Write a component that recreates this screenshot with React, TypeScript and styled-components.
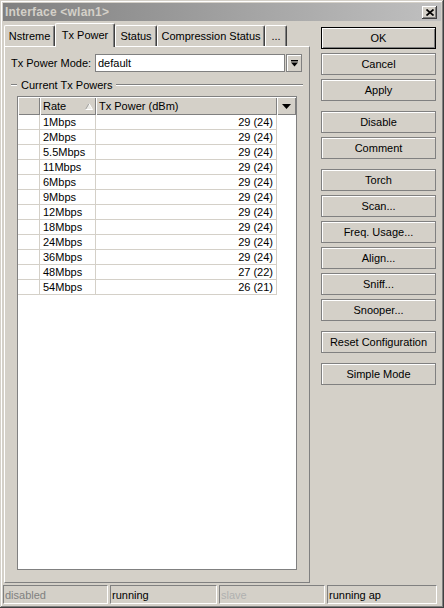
import styled, { createGlobalStyle } from "styled-components";

const GlobalStyle = createGlobalStyle`
  html, body {
    margin: 0;
    padding: 0;
    background: #d4d0c8;
  }
  body {
    font-family: "Liberation Sans", Arial, sans-serif;
    font-size: 11px;
    color: #000;
  }
  * {
    box-sizing: border-box;
  }
`;

const Window = styled.div`
  width: 444px;
  height: 608px;
  padding: 3px;
  display: flex;
  flex-direction: column;
  background: #d4d0c8;
  box-shadow: inset -1px -1px #404040, inset 1px 1px #d4d0c8,
    inset -2px -2px #808080, inset 2px 2px #ffffff;
`;

const TitleBar = styled.div`
  height: 18px;
  display: flex;
  align-items: center;
  justify-content: space-between;
  padding: 0 4px 0 2px;
  background: linear-gradient(to right, #808080, #c0c0c0);
`;

const Title = styled.span`
  color: #d4d0c8;
  font-weight: bold;
  font-size: 12px;
  letter-spacing: 0.2px;
`;

const CloseButton = styled.div`
  width: 15px;
  height: 13px;
  display: flex;
  align-items: center;
  justify-content: center;
  background: #d4d0c8;
  box-shadow: inset -1px -1px #404040, inset 1px 1px #ffffff,
    inset -2px -2px #808080;
`;

const Body = styled.div`
  flex: 1;
  display: flex;
  margin-top: 2px;
  padding-left: 1px;
  min-height: 0;
`;

const LeftPane = styled.div`
  width: 306px;
  display: flex;
  flex-direction: column;
`;

const TabStrip = styled.div`
  height: 23px;
  display: flex;
  align-items: flex-end;
  position: relative;
  z-index: 1;
`;

const Tab = styled.div<{ $active?: boolean; $w: number }>`
  width: ${(p) => p.$w}px;
  height: ${(p) => (p.$active ? 24 : 21)}px;
  margin-bottom: ${(p) => (p.$active ? -1 : 0)}px;
  display: flex;
  align-items: center;
  justify-content: center;
  padding-bottom: ${(p) => (p.$active ? 2 : 0)}px;
  background: #d4d0c8;
  border-top: 1px solid #ffffff;
  border-left: 1px solid #ffffff;
  border-right: 1px solid #404040;
  border-radius: 2px 2px 0 0;
  box-shadow: inset -1px 0 #808080;
  white-space: nowrap;
`;

const Panel = styled.div`
  flex: 1;
  display: flex;
  flex-direction: column;
  padding: 7px 6px 12px 6px;
  border-top: 1px solid #ffffff;
  border-left: 1px solid #ffffff;
  border-right: 1px solid #808080;
  border-bottom: 1px solid #808080;
  min-height: 0;
`;

const ModeRow = styled.div`
  height: 18px;
  display: flex;
  align-items: center;
  padding-right: 1px;
`;

const ModeLabel = styled.span`
  width: 84px;
  flex-shrink: 0;
`;

const ModeInput = styled.div`
  flex: 1;
  height: 18px;
  margin-right: 1px;
  padding-left: 2px;
  display: flex;
  align-items: center;
  background: #ffffff;
  border: 1px solid #808080;
`;

const DropButton = styled.div`
  width: 16px;
  height: 18px;
  display: flex;
  align-items: center;
  justify-content: center;
  background: #d4d0c8;
  border: 1px solid #808080;
  box-shadow: inset 1px 1px #ffffff;
`;

const GroupHeader = styled.div`
  height: 14px;
  margin-top: 6px;
  display: flex;
  align-items: center;
  gap: 3px;
`;

const GroupLine = styled.div<{ $grow?: boolean }>`
  height: 2px;
  width: ${(p) => (p.$grow ? "auto" : "6px")};
  flex: ${(p) => (p.$grow ? 1 : "none")};
  border-top: 1px solid #808080;
  border-bottom: 1px solid #ffffff;
  margin-right: ${(p) => (p.$grow ? 0 : 1)}px;
`;

const Table = styled.div`
  flex: 1;
  margin: 4px 6px 0 6px;
  background: #ffffff;
  border: 1px solid #808080;
  display: flex;
  flex-direction: column;
  min-height: 0;
`;

const GridRow = styled.div<{ $h: number }>`
  display: grid;
  grid-template-columns: 22px 56px 181px 19px;
  height: ${(p) => p.$h}px;
`;

const HeadCell = styled.div<{ $center?: boolean }>`
  display: flex;
  align-items: center;
  justify-content: ${(p) => (p.$center ? "center" : "space-between")};
  padding: 0 3px;
  background: #d4d0c8;
  box-shadow: inset 1px 1px #ffffff, inset -1px -1px #808080;
`;

const Cell = styled.div<{ $right?: boolean; $blank?: boolean }>`
  display: flex;
  align-items: center;
  justify-content: ${(p) => (p.$right ? "flex-end" : "flex-start")};
  padding: 0 3px;
  border-right: ${(p) => (p.$blank ? "none" : "1px solid #d4d0c8")};
  border-bottom: ${(p) => (p.$blank ? "none" : "1px solid #d4d0c8")};
`;

const ButtonColumn = styled.div`
  width: 115px;
  margin-left: 11px;
  padding-top: 4px;
  display: flex;
  flex-direction: column;
  gap: 10px;
`;

const ButtonGroup = styled.div`
  display: flex;
  flex-direction: column;
  gap: 4px;
`;

const Button = styled.div<{ $default?: boolean }>`
  height: 22px;
  display: flex;
  align-items: center;
  justify-content: center;
  background: #d4d0c8;
  border: 1px solid ${(p) => (p.$default ? "#000000" : "#808080")};
  box-shadow: inset 1px 1px #ffffff
    ${(p) => (p.$default ? ", inset -1px -1px #808080" : "")};
`;

const StatusBar = styled.div`
  height: 19px;
  margin: 2px 0 1px 0;
  display: grid;
  grid-template-columns: 105px 107px 106px 1fr;
  gap: 2px;
  padding-right: 4px;
`;

const StatusCell = styled.div<{ $muted?: string }>`
  display: flex;
  align-items: center;
  padding-left: 1px;
  color: ${(p) => p.$muted ?? "#000000"};
  border-top: 1px solid #808080;
  border-left: 1px solid #808080;
  border-right: 1px solid #ffffff;
  border-bottom: 1px solid #ffffff;
`;

const tabs = [
  { label: "Nstreme", w: 51 },
  { label: "Tx Power", w: 60, active: true },
  { label: "Status", w: 42 },
  { label: "Compression Status", w: 108 },
  { label: "...", w: 22 },
];

const powers: [string, string][] = [
  ["1Mbps", "29 (24)"],
  ["2Mbps", "29 (24)"],
  ["5.5Mbps", "29 (24)"],
  ["11Mbps", "29 (24)"],
  ["6Mbps", "29 (24)"],
  ["9Mbps", "29 (24)"],
  ["12Mbps", "29 (24)"],
  ["18Mbps", "29 (24)"],
  ["24Mbps", "29 (24)"],
  ["36Mbps", "29 (24)"],
  ["48Mbps", "27 (22)"],
  ["54Mbps", "26 (21)"],
];

const buttonGroups = [
  ["OK", "Cancel", "Apply"],
  ["Disable", "Comment"],
  ["Torch", "Scan...", "Freq. Usage...", "Align...", "Sniff...", "Snooper..."],
  ["Reset Configuration"],
  ["Simple Mode"],
];

const CloseIcon = () => (
  <svg width="8" height="7" viewBox="0 0 8 7">
    <path d="M0.5 0.5 L7.5 6.5 M7.5 0.5 L0.5 6.5" stroke="#000" strokeWidth="1.7" />
  </svg>
);

const ComboArrow = () => (
  <svg width="7" height="7" viewBox="0 0 7 7">
    <rect x="0" y="0" width="7" height="1.4" fill="#000" />
    <polygon points="0,2.5 7,2.5 3.5,6.5" fill="#000" />
  </svg>
);

const DownArrow = () => (
  <svg width="9" height="5" viewBox="0 0 9 5">
    <polygon points="0,0 9,0 4.5,5" fill="#000" />
  </svg>
);

const SortArrow = () => (
  <svg width="8" height="7" viewBox="0 0 8 7">
    <polygon points="4,0.5 7.5,6.5 0.5,6.5" fill="#ecebe6" />
    <path d="M4 0.5 L0.5 6.5" stroke="#a0a0a0" strokeWidth="1" />
    <path d="M4 0.5 L7.5 6.5 L0.5 6.5" stroke="#ffffff" strokeWidth="1" fill="none" />
  </svg>
);

const App = () => {
  return (
    <>
      <GlobalStyle />
      <Window>
        <TitleBar>
          <Title>Interface &lt;wlan1&gt;</Title>
          <CloseButton>
            <CloseIcon />
          </CloseButton>
        </TitleBar>
        <Body>
          <LeftPane>
            <TabStrip>
              {tabs.map((t) => (
                <Tab key={t.label} $w={t.w} $active={t.active}>
                  {t.label}
                </Tab>
              ))}
            </TabStrip>
            <Panel>
              <ModeRow>
                <ModeLabel>Tx Power Mode:</ModeLabel>
                <ModeInput>default</ModeInput>
                <DropButton>
                  <ComboArrow />
                </DropButton>
              </ModeRow>
              <GroupHeader>
                <GroupLine />
                <span>Current Tx Powers</span>
                <GroupLine $grow />
              </GroupHeader>
              <Table>
                <GridRow $h={18}>
                  <HeadCell />
                  <HeadCell>
                    <span>Rate</span>
                    <SortArrow />
                  </HeadCell>
                  <HeadCell>Tx Power (dBm)</HeadCell>
                  <HeadCell $center>
                    <DownArrow />
                  </HeadCell>
                </GridRow>
                {powers.map(([rate, power]) => (
                  <GridRow key={rate} $h={15}>
                    <Cell />
                    <Cell>{rate}</Cell>
                    <Cell $right>{power}</Cell>
                    <Cell $blank />
                  </GridRow>
                ))}
              </Table>
            </Panel>
          </LeftPane>
          <ButtonColumn>
            {buttonGroups.map((group, i) => (
              <ButtonGroup key={i}>
                {group.map((label) => (
                  <Button key={label} $default={label === "OK"}>
                    {label}
                  </Button>
                ))}
              </ButtonGroup>
            ))}
          </ButtonColumn>
        </Body>
        <StatusBar>
          <StatusCell $muted="#808080">disabled</StatusCell>
          <StatusCell>running</StatusCell>
          <StatusCell $muted="#b0b0b0">slave</StatusCell>
          <StatusCell>running ap</StatusCell>
        </StatusBar>
      </Window>
    </>
  );
};

export default App;
